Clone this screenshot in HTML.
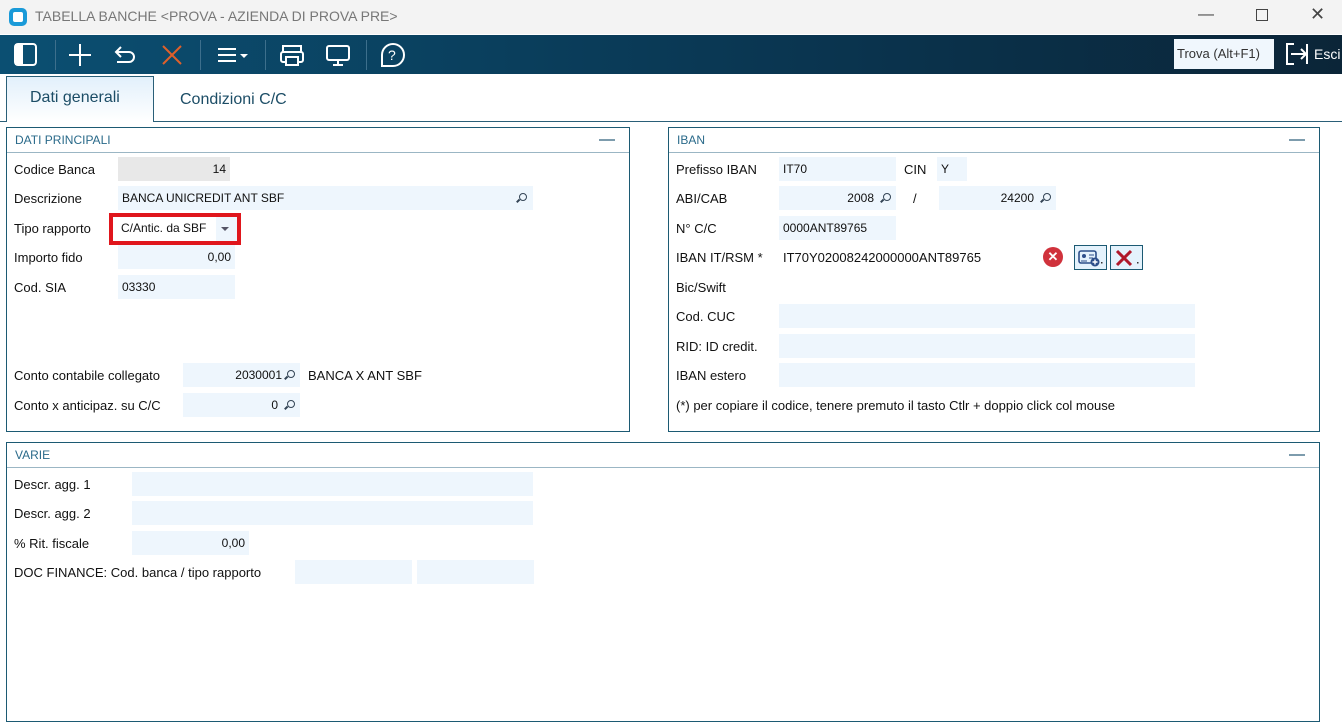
<!DOCTYPE html>
<html><head><meta charset="utf-8"><style>
*{margin:0;padding:0;box-sizing:border-box}
body{width:1342px;height:695px;overflow:hidden;background:#fff;font-family:"Liberation Sans",sans-serif;font-size:13px;color:#111;position:relative}
.a{position:absolute;white-space:nowrap}
.f{position:absolute;background:#eef6fd;height:24px;line-height:24px;font-size:12px;padding:0 4px}
.r{text-align:right}
.p{position:absolute;border:1px solid #1c5a73}
.ph{position:absolute;left:0;right:0;top:0;height:25px;border-bottom:1px solid #9bb6c4;color:#2a6a8a;font-size:12px;line-height:25px;padding-left:8px}
.ph:after{content:"";position:absolute;right:14px;top:11px;width:16px;height:2px;background:#7d9cad}
.mg{position:absolute;top:7px;width:8px;height:8px;border:1.5px solid #345;border-radius:50%}
.mg:after{content:"";position:absolute;left:-4px;top:6px;width:4px;height:1.5px;background:#345;transform:rotate(-45deg)}
.sep{position:absolute;top:40px;width:1px;height:30px;background:#3d6f8c}
</style></head><body>
<div class="a" style="left:0;top:0;width:1342px;height:34px;background:#f3f3f3"></div>
<div class="a" style="left:9px;top:8px;width:18px;height:18px;border-radius:5px;background:#1a9ad8"></div>
<div class="a" style="left:13px;top:12px;width:10px;height:10px;border-radius:2px;background:#fff"></div>
<div class="a" style="left:35px;top:8px;font-size:14px;color:#777">TABELLA BANCHE &lt;PROVA - AZIENDA DI PROVA PRE&gt;</div>
<div class="a" style="left:1198px;top:6px;font-size:16px;color:#444">—</div>
<div class="a" style="left:1256px;top:9px;width:12px;height:12px;border:1px solid #444"></div>
<div class="a" style="left:1310px;top:4px;font-size:18px;color:#444">✕</div>
<div class="a" style="left:0;top:35px;width:1342px;height:39px;background:linear-gradient(90deg,#0b4f72,#0a3550 60%,#0b2538)"></div>
<svg class="a" style="left:0;top:35px" width="420" height="39" fill="none" stroke="#fff" stroke-width="2">
<rect x="15" y="9" width="21" height="21" rx="3"/><rect x="16" y="10" width="6" height="19" fill="#fff"/>
<path d="M80 9v22M69 20h22"/>
<path d="M121 12l-5 5 5 5M116 17h13a5 5 0 010 10h-12"/>
<path d="M163 11l18 18M181 11l-18 18" stroke="#e0602a"/>
<path d="M218 14h18M218 20h18M218 26h18"/><path d="M240 19h8l-4 4z" fill="#fff" stroke="none"/>
<rect x="283" y="11" width="18" height="6"/><rect x="281" y="17" width="22" height="10" rx="2"/><rect x="286" y="22" width="12" height="8" fill="#0a4060"/>
<rect x="327" y="11" width="22" height="14" rx="2"/><path d="M333 30h10M338 25v5"/>
<path d="M393 9a11 11 0 110 22h-11v-11a11 11 0 0111-11z"/><text x="388" y="25" fill="#fff" stroke="none" font-size="14" font-family="Liberation Sans">?</text>
</svg>
<div class="sep" style="left:55px"></div><div class="sep" style="left:200px"></div><div class="sep" style="left:265px"></div><div class="sep" style="left:366px"></div>
<div class="a" style="left:1174px;top:39px;width:100px;height:30px;background:#f0f7fd;line-height:30px;padding-left:3px;font-size:13px;color:#333">Trova (Alt+F1)</div>
<svg class="a" style="left:1285px;top:42px" width="24" height="24" fill="none" stroke="#fff" stroke-width="2"><path d="M9 2H2v20h7M22 2v20M6 12h15M16 7l5 5-5 5"/></svg>
<div class="a" style="left:1314px;top:46px;color:#fff;font-size:14px">Esci</div>
<div class="a" style="left:0;top:121px;width:1342px;height:1px;background:#2a5f78"></div>
<div class="a" style="left:6px;top:76px;width:148px;height:46px;background:linear-gradient(#e2f0fb,#fff);border:1px solid #2a5f78;border-bottom:none"></div>
<div class="a" style="left:30px;top:89px;font-size:16px;color:#1c4d66">Dati generali</div>
<div class="a" style="left:180px;top:91px;font-size:16px;color:#1c4d66">Condizioni C/C</div>

<div class="p" style="left:6px;top:127px;width:624px;height:305px"><div class="ph">DATI PRINCIPALI</div></div>
<div class="a" style="left:14px;top:162px">Codice Banca</div><div class="f r" style="left:118px;top:157px;width:112px;background:#e8e8e8">14</div>
<div class="a" style="left:14px;top:191px">Descrizione</div><div class="f" style="left:118px;top:186px;width:415px">BANCA UNICREDIT ANT SBF<span class="mg" style="right:6px"></span></div>
<div class="a" style="left:14px;top:221px">Tipo rapporto</div>
<div class="a" style="left:109px;top:213px;width:132px;height:32px;border:4px solid #e0161c"></div>
<div class="a" style="left:121px;top:221px;font-size:12px">C/Antic. da SBF</div><div class="a" style="left:216px;top:217px;width:21px;height:24px;background:#eef6fd"></div><div class="a" style="left:221px;top:227px;border:4px solid transparent;border-top:4px solid #556"></div>
<div class="a" style="left:14px;top:250px">Importo fido</div><div class="f r" style="left:118px;top:245px;width:117px">0,00</div>
<div class="a" style="left:14px;top:280px">Cod. SIA</div><div class="f" style="left:118px;top:275px;width:117px">03330</div>
<div class="a" style="left:14px;top:368px">Conto contabile collegato</div><div class="f r" style="left:183px;top:363px;width:117px;padding-right:18px">2030001<span class="mg" style="right:5px"></span></div>
<div class="a" style="left:308px;top:368px">BANCA X ANT SBF</div>
<div class="a" style="left:14px;top:398px">Conto x anticipaz. su C/C</div><div class="f r" style="left:183px;top:393px;width:117px;padding-right:22px">0<span class="mg" style="right:5px"></span></div>

<div class="p" style="left:668px;top:127px;width:652px;height:305px"><div class="ph">IBAN</div></div>
<div class="a" style="left:676px;top:162px">Prefisso IBAN</div><div class="f" style="left:779px;top:157px;width:117px">IT70</div>
<div class="a" style="left:904px;top:162px">CIN</div><div class="f" style="left:937px;top:157px;width:30px">Y</div>
<div class="a" style="left:676px;top:191px">ABI/CAB</div><div class="f r" style="left:779px;top:186px;width:117px;padding-right:22px">2008<span class="mg" style="right:5px"></span></div>
<div class="a" style="left:913px;top:191px">/</div><div class="f r" style="left:939px;top:186px;width:117px;padding-right:22px">24200<span class="mg" style="right:5px"></span></div>
<div class="a" style="left:676px;top:221px">N° C/C</div><div class="f" style="left:779px;top:216px;width:117px">0000ANT89765</div>
<div class="a" style="left:676px;top:250px">IBAN IT/RSM *</div><div class="a" style="left:783px;top:250px">IT70Y02008242000000ANT89765</div>
<div class="a" style="left:1043px;top:247px;width:20px;height:20px;border-radius:50%;background:#d0323c;color:#fff;text-align:center;line-height:20px;font-size:13px;font-weight:bold">✕</div>
<div class="a" style="left:1074px;top:245px;width:33px;height:25px;border:1px solid #1c5a73;background:#e4f2fc"></div>
<svg class="a" style="left:1078px;top:249px" width="26" height="18"><rect x="1" y="2" width="17" height="12" rx="2" fill="none" stroke="#2d4f8a" stroke-width="1.6"/><circle cx="6" cy="7" r="2" fill="#2d4f8a"/><path d="M3 12h6M11 6h5M11 9h4" stroke="#2d4f8a"/><circle cx="17" cy="13" r="4.5" fill="#2d4f8a"/><path d="M17 10.5v5M14.5 13h5" stroke="#fff" stroke-width="1.4"/><rect x="23" y="13" width="1.5" height="1.5" fill="#333"/></svg>
<div class="a" style="left:1110px;top:245px;width:33px;height:25px;border:1px solid #1c5a73;background:#e4f2fc"></div>
<svg class="a" style="left:1114px;top:249px" width="26" height="18"><path d="M3 2l14 14M17 2L3 16" stroke="#b0182a" stroke-width="3"/><rect x="23" y="13" width="1.5" height="1.5" fill="#333"/></svg>
<div class="a" style="left:676px;top:280px">Bic/Swift</div>
<div class="a" style="left:676px;top:309px">Cod. CUC</div><div class="f" style="left:779px;top:304px;width:416px"></div>
<div class="a" style="left:676px;top:339px">RID: ID credit.</div><div class="f" style="left:779px;top:334px;width:416px"></div>
<div class="a" style="left:676px;top:368px">IBAN estero</div><div class="f" style="left:779px;top:363px;width:416px"></div>
<div class="a" style="left:676px;top:398px">(*) per copiare il codice, tenere premuto il tasto Ctlr + doppio click col mouse</div>

<div class="p" style="left:6px;top:442px;width:1314px;height:280px"><div class="ph">VARIE</div></div>
<div class="a" style="left:14px;top:477px">Descr. agg. 1</div><div class="f" style="left:132px;top:472px;width:401px"></div>
<div class="a" style="left:14px;top:506px">Descr. agg. 2</div><div class="f" style="left:132px;top:501px;width:401px"></div>
<div class="a" style="left:14px;top:536px">% Rit. fiscale</div><div class="f r" style="left:132px;top:531px;width:117px">0,00</div>
<div class="a" style="left:14px;top:565px">DOC FINANCE: Cod. banca / tipo rapporto</div><div class="f" style="left:295px;top:560px;width:117px"></div><div class="f" style="left:417px;top:560px;width:117px"></div>
</body></html>
